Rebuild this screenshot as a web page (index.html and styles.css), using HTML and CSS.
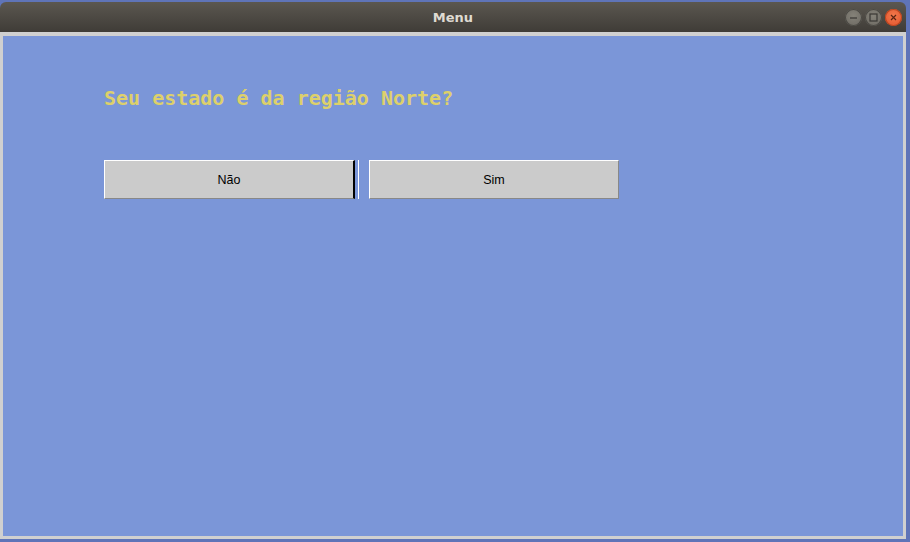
FILE: index.html
```html
<!DOCTYPE html>
<html>
<head>
<meta charset="utf-8">
<link rel="stylesheet" href="styles.css">
</head>
<body>
<div class="window">
  <div class="titlebar">
    <span class="title">Menu</span>
    <div class="controls">
      <span class="ctl ctl-min"><svg width="17" height="17" viewBox="0 0 17 17"><line x1="5" y1="9" x2="12" y2="9" stroke="#3a3834" stroke-width="1.2"/></svg></span>
      <span class="ctl ctl-max"><svg width="17" height="17" viewBox="0 0 17 17"><rect x="5" y="5" width="7" height="7" fill="none" stroke="#3a3834" stroke-width="1.2"/></svg></span>
      <span class="ctl ctl-close"><svg width="17" height="17" viewBox="0 0 17 17"><path d="M6 6 L11 11 M11 6 L6 11" stroke="#5a2412" stroke-width="1.2"/></svg></span>
    </div>
  </div>
  <div class="frame">
    <div class="content">
      <h1 class="question">Seu estado é da região Norte?</h1>
      <div class="buttons">
        <button class="btn btn-focus">Não</button>
        <span class="sep"></span>
        <button class="btn btn-second">Sim</button>
      </div>
    </div>
  </div>
</div>
</body>
</html>
```

FILE: styles.css
```css
html, body {
  margin: 0;
  padding: 0;
}
body {
  width: 910px;
  height: 542px;
  background: #5f74b8;
  overflow: hidden;
}
.window {
  width: 906px;
  margin-top: 2px;
  display: flex;
  flex-direction: column;
}
.titlebar {
  height: 30px;
  border-radius: 6px 6px 0 0;
  background: linear-gradient(#5b5750, #3f3c37);
  position: relative;
  display: flex;
  align-items: center;
  justify-content: center;
}
.title {
  font-family: "DejaVu Sans", sans-serif;
  font-weight: bold;
  font-size: 13px;
  color: #dfdbd2;
  margin-top: 1px;
}
.controls {
  position: absolute;
  right: 4px;
  top: 7px;
  display: flex;
  gap: 3px;
}
.ctl {
  width: 17px;
  height: 17px;
  border-radius: 50%;
  display: block;
  box-sizing: border-box;
}
.ctl svg { display: block; }
.ctl-min, .ctl-max {
  background: radial-gradient(circle at 50% 40%, #858279, #6a6760);
  box-shadow: inset 0 0 0 1px #4a4843;
}
.ctl-close {
  background: radial-gradient(circle at 50% 40%, #f27a4c, #e0502a);
  box-shadow: inset 0 0 0 1px #b8451f;
}
.frame {
  height: 500px;
  border: 3px solid #d0d0d0;
  border-top-width: 4px;
  background: #7b96d8;
}
.content {
  padding: 50px 0 0 101px;
}
.question {
  margin: 0;
  font-family: "DejaVu Sans Mono", monospace;
  font-weight: bold;
  font-size: 20px;
  line-height: 25px;
  color: #ddd06b;
}
.buttons {
  display: flex;
  margin-top: 49px;
  height: 39px;
}
.btn {
  width: 251px;
  height: 39px;
  margin: 0;
  padding: 0;
  background: #cbcbcb;
  border: none;
  border-top: 1px solid #ffffff;
  border-left: 1px solid #ffffff;
  border-bottom: 1px solid #888888;
  border-right: 1px solid #888888;
  font-family: "Liberation Sans", Arial, sans-serif;
  font-size: 12.5px;
  color: #000;
  box-sizing: border-box;
}
.btn-focus {
  border-right: 2px solid #000000;
}
.btn-second {
  width: 250px;
}
.sep {
  width: 1px;
  height: 39px;
  background: #ffffff;
  margin: 0 10px 0 3px;
}
```
